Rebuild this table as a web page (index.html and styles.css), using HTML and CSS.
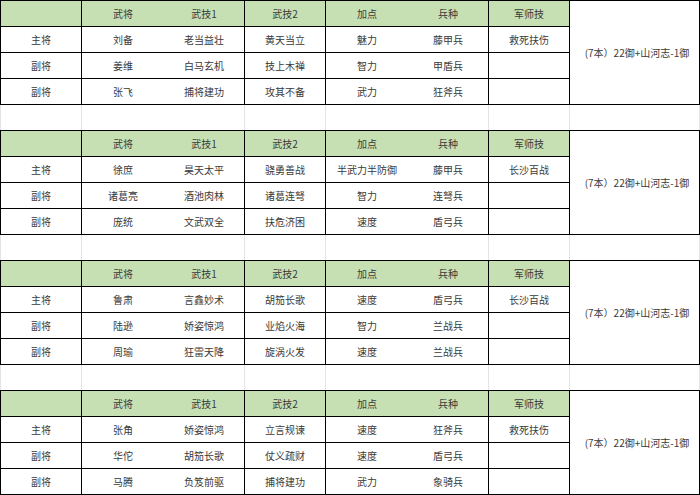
FILE: index.html
```html
<!DOCTYPE html>
<html lang="zh-CN">
<head>
<meta charset="utf-8">
<link rel="stylesheet" href="styles.css">
</head>
<body>
<div class="sheet">
  <div class="group">
    <div class="c a hd"></div><div class="c b hd">武将</div><div class="c cc hd">武技1</div><div class="c d hd">武技2</div><div class="c e hd">加点</div><div class="c f hd">兵种</div><div class="c g hd">军师技</div>
    <div class="c h merged">(7本）22御+山河志-1御</div>
    <div class="c a">主将</div><div class="c b">刘备</div><div class="c cc">老当益壮</div><div class="c d">黄天当立</div><div class="c e">魅力</div><div class="c f">藤甲兵</div><div class="c g">救死扶伤</div>
    <div class="c a">副将</div><div class="c b">姜维</div><div class="c cc">白马玄机</div><div class="c d">技上木禅</div><div class="c e">智力</div><div class="c f">甲盾兵</div><div class="c g"></div>
    <div class="c a">副将</div><div class="c b">张飞</div><div class="c cc">捕将建功</div><div class="c d">攻其不备</div><div class="c e">武力</div><div class="c f">狂斧兵</div><div class="c g"></div>
  </div>
  <div class="gap"><span class="ga"></span><span class="gbc"></span><span class="gd"></span><span class="gef"></span><span class="gg"></span><span class="gh"></span></div>
  <div class="group">
    <div class="c a hd"></div><div class="c b hd">武将</div><div class="c cc hd">武技1</div><div class="c d hd">武技2</div><div class="c e hd">加点</div><div class="c f hd">兵种</div><div class="c g hd">军师技</div>
    <div class="c h merged">(7本）22御+山河志-1御</div>
    <div class="c a">主将</div><div class="c b">徐庶</div><div class="c cc">昊天太平</div><div class="c d">骁勇善战</div><div class="c e">半武力半防御</div><div class="c f">藤甲兵</div><div class="c g">长沙百战</div>
    <div class="c a">副将</div><div class="c b">诸葛亮</div><div class="c cc">酒池肉林</div><div class="c d">诸葛连弩</div><div class="c e">智力</div><div class="c f">连弩兵</div><div class="c g"></div>
    <div class="c a">副将</div><div class="c b">庞统</div><div class="c cc">文武双全</div><div class="c d">扶危济困</div><div class="c e">速度</div><div class="c f">盾弓兵</div><div class="c g"></div>
  </div>
  <div class="gap"><span class="ga"></span><span class="gbc"></span><span class="gd"></span><span class="gef"></span><span class="gg"></span><span class="gh"></span></div>
  <div class="group">
    <div class="c a hd"></div><div class="c b hd">武将</div><div class="c cc hd">武技1</div><div class="c d hd">武技2</div><div class="c e hd">加点</div><div class="c f hd">兵种</div><div class="c g hd">军师技</div>
    <div class="c h merged">(7本）22御+山河志-1御</div>
    <div class="c a">主将</div><div class="c b">鲁肃</div><div class="c cc">言鑫妙术</div><div class="c d">胡笳长歌</div><div class="c e">速度</div><div class="c f">盾弓兵</div><div class="c g">长沙百战</div>
    <div class="c a">副将</div><div class="c b">陆逊</div><div class="c cc">娇姿惊鸿</div><div class="c d">业焰火海</div><div class="c e">智力</div><div class="c f">兰战兵</div><div class="c g"></div>
    <div class="c a">副将</div><div class="c b">周瑜</div><div class="c cc">狂雷天降</div><div class="c d">旋涡火发</div><div class="c e">速度</div><div class="c f">兰战兵</div><div class="c g"></div>
  </div>
  <div class="gap"><span class="ga"></span><span class="gbc"></span><span class="gd"></span><span class="gef"></span><span class="gg"></span><span class="gh"></span></div>
  <div class="group">
    <div class="c a hd"></div><div class="c b hd">武将</div><div class="c cc hd">武技1</div><div class="c d hd">武技2</div><div class="c e hd">加点</div><div class="c f hd">兵种</div><div class="c g hd">军师技</div>
    <div class="c h merged">(7本）22御+山河志-1御</div>
    <div class="c a">主将</div><div class="c b">张角</div><div class="c cc">娇姿惊鸿</div><div class="c d">立言规谏</div><div class="c e">速度</div><div class="c f">狂斧兵</div><div class="c g">救死扶伤</div>
    <div class="c a">副将</div><div class="c b">华佗</div><div class="c cc">胡笳长歌</div><div class="c d">仗义疏财</div><div class="c e">速度</div><div class="c f">盾弓兵</div><div class="c g"></div>
    <div class="c a">副将</div><div class="c b">马腾</div><div class="c cc">负笈前驱</div><div class="c d">捕将建功</div><div class="c e">武力</div><div class="c f">象骑兵</div><div class="c g"></div>
  </div>
</div>
</body>
</html>
```
FILE: styles.css
```css
html, body {
  margin: 0;
  padding: 0;
  background: #ffffff;
}
.sheet {
  width: 700px;
  font-family: "Noto Sans CJK SC", "Noto Sans", sans-serif;
  font-size: 10px;
  color: #3a3a3a;
}
.group {
  display: grid;
  grid-template-columns: 81px 82px 81px 81px 82px 81px 81px 130px;
  grid-template-rows: repeat(4, 26px);
  border-top: 1px solid #000;
  border-left: 1px solid #000;
  width: 700px;
  box-sizing: border-box;
}
.c {
  box-sizing: border-box;
  border-bottom: 1px solid #000;
  display: flex;
  align-items: center;
  justify-content: center;
  white-space: nowrap;
  line-height: 1;
}
.a, .cc, .d, .f, .g, .h {
  border-right: 1px solid #000;
}
.hd {
  background: #c6e0b4;
}
.h {
  grid-column: 8;
  grid-row: 1 / span 4;
}
.merged {
  padding-left: 5px;
}
.gap {
  display: flex;
  height: 25px;
}
.gap span {
  box-sizing: border-box;
  border-right: 1px solid #e4e4e4;
  height: 25px;
}
.ga { width: 82px; border-left: 1px solid #e4e4e4; }
.gbc { width: 163px; }
.gd { width: 81px; }
.gef { width: 163px; }
.gg { width: 81px; }
.gh { width: 130px; }
```
